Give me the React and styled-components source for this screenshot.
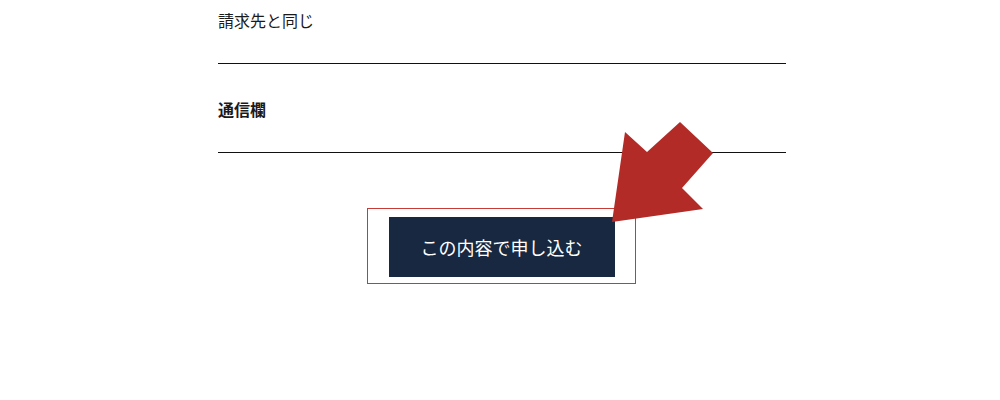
import React from 'react';
import styled, { createGlobalStyle } from 'styled-components';

const GlobalStyle = createGlobalStyle`
    html, body {
        margin: 0;
        padding: 0;
        background: #ffffff;
        overflow: hidden;
    }
    body {
        font-family: 'Noto Sans CJK JP', 'Noto Sans', sans-serif;
        color: #1a1a1a;
    }
`;

const Page = styled.div`
    width: 1000px;
    height: 400px;
    overflow: hidden;
    display: flex;
    justify-content: center;
`;

const Form = styled.form`
    width: 568px;
    margin-left: 4px;
    // page is scrolled a little, first row starts above the fold
    margin-top: -25px;
    display: flex;
    flex-direction: column;
`;

const Row = styled.div`
    height: 89px;
    box-sizing: border-box;
    padding-top: 33px;
    border-bottom: 1px solid #111111;
`;

const Label = styled.div`
    font-size: 16px;
    line-height: 24px;
    font-weight: ${({ bold }) => (bold ? 700 : 400)};
    color: #1a1a1a;
`;

const SubmitArea = styled.div`
    position: relative;
    margin-top: 55px;
    display: flex;
    justify-content: center;
`;

const Highlight = styled.div`
    width: 269px;
    height: 76px;
    box-sizing: border-box;
    border: 1px solid #c73b37;
    padding: 8px 20px 6px 21px;
    display: flex;
    margin-left: -2px;
`;

const SubmitButton = styled.button`
    flex: 1;
    border: none;
    background: #172840;
    color: #ffffff;
    font-family: 'Noto Sans CJK JP', 'Noto Sans', sans-serif;
    font-size: 18px;
    padding: 0;
    cursor: pointer;
`;

const Arrow = styled.svg`
    position: absolute;
    left: 392px;
    top: -90px;
    width: 106px;
    height: 106px;
    pointer-events: none;
`;

export default function App() {
    return (
        <>
            <GlobalStyle />
            <Page>
                <Form onSubmit={(e) => e.preventDefault()}>
                    <Row>
                        <Label>請求先と同じ</Label>
                    </Row>
                    <Row>
                        <Label bold>通信欄</Label>
                    </Row>
                    <SubmitArea>
                        <Highlight>
                            <SubmitButton type="submit">この内容で申し込む</SubmitButton>
                        </Highlight>
                        <Arrow viewBox="610 118 106 106">
                            <polygon
                                points="612,222 625,132 647,152 680,122 713,153 682,188 703,209"
                                fill="#b22b27"
                            />
                        </Arrow>
                    </SubmitArea>
                </Form>
            </Page>
        </>
    );
}
